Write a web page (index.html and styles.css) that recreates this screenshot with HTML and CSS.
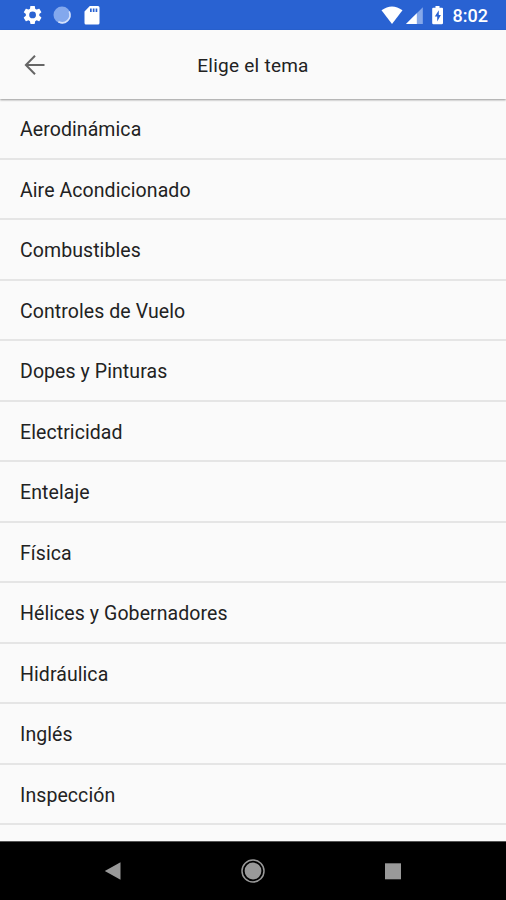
FILE: index.html
```html
<!DOCTYPE html>
<html lang="es">
<head>
<meta charset="utf-8">
<title>Elige el tema</title>
<link rel="stylesheet" href="styles.css">
</head>
<body>
<div class="screen">
  <div class="status">
    <svg class="status-icons" width="90" height="30" viewBox="0 0 90 30">
      <path fill="#fff" transform="translate(-.7 3.7) scale(.94)" d="M19.14 12.94c.04-.3.06-.61.06-.94s-.02-.64-.07-.94l2.03-1.58c.18-.14.23-.41.12-.61l-1.92-3.32c-.12-.22-.37-.29-.59-.22l-2.39.96c-.5-.38-1.03-.7-1.62-.94l-.36-2.54c-.04-.24-.24-.41-.48-.41h-3.84c-.24 0-.43.17-.47.41l-.36 2.54c-.59.24-1.13.57-1.62.94l-2.39-.96c-.22-.08-.47 0-.59.22L2.74 8.87c-.12.21-.08.47.12.61l2.03 1.58c-.05.3-.09.63-.09.94s.02.64.07.94l-2.03 1.58c-.18.14-.23.41-.12.61l1.92 3.32c.12.22.37.29.59.22l2.39-.96c.5.38 1.03.7 1.62.94l.36 2.54c.05.24.24.41.48.41h3.84c.24 0 .44-.17.47-.41l.36-2.54c.59-.24 1.13-.56 1.62-.94l2.39.96c.22.08.47 0 .59-.22l1.92-3.32c.12-.22.07-.47-.12-.61l-2.01-1.58zM12 15.6A3.6 3.6 0 1 1 12 8.4a3.6 3.6 0 0 1 0 7.2z"/>
      <circle cx="40" cy="15" r="8.5" fill="#83a8ed"/>
      <path d="M47.4 12a7.8 7.8 0 0 1-10.5 10" fill="none" stroke="#d5e2fb" stroke-width="1.6" stroke-linecap="round"/>
      <path fill="#fff" fill-rule="evenodd" d="M67.8 6H76q1.500 0 1.500 1.500V23q0 1.500-1.500 1.500H64q-1.500 0-1.500-1.500V11.500zM68 8.500V12h1.700V8.500zm2.800 0V12h1.700V8.500zm2.800 0V12h1.700V8.500z"/>
    </svg>
    <div class="status-right">
      <svg class="signals" width="64" height="30" viewBox="0 0 64 30">
        <path fill="#fff" d="M.5 10.300Q11 2.500 21.500 10.300L11 24z"/>
        <path fill="#86a8e9" d="M41.800 7.200V24H25z"/>
        <path fill="#fff" d="M35.800 13.200V24H25z"/>
        <path fill="#fff" d="M54.500 6h4v1.800H61q1 0 1 1V23q0 1.300-1.300 1.300h-8.200q-1.300 0-1.300-1.300V8.800q0-1 1-1h2.300z"/>
        <path fill="#2962d2" d="M57.800 10.300l-4 6.200h2.400v4.900l3.700-6.300h-2.100z"/>
      </svg>
      <span class="clock">8:02</span>
    </div>
  </div>
  <header class="header">
    <svg class="back" width="22" height="22" viewBox="0 0 22 22"><path d="M20.500 11H2M11 1.800L1.900 11l9.100 9.200" fill="none" stroke="#666" stroke-width="2"/></svg>
    <h1 class="title">Elige el tema</h1>
  </header>
  <ul class="topics">
    <li class="topic">Aerodinámica</li>
    <li class="topic">Aire Acondicionado</li>
    <li class="topic">Combustibles</li>
    <li class="topic">Controles de Vuelo</li>
    <li class="topic">Dopes y Pinturas</li>
    <li class="topic">Electricidad</li>
    <li class="topic">Entelaje</li>
    <li class="topic">Física</li>
    <li class="topic">Hélices y Gobernadores</li>
    <li class="topic">Hidráulica</li>
    <li class="topic">Inglés</li>
    <li class="topic">Inspección</li>
  </ul>
  <nav class="nav">
    <svg width="24" height="24" viewBox="0 0 24 24"><path d="M3.800 12L19.500 3.300v17.400z" fill="#999"/></svg>
    <svg width="24" height="24" viewBox="0 0 24 24"><circle cx="12" cy="12" r="11" fill="none" stroke="#999" stroke-width="1.500"/><circle cx="12" cy="12" r="8.400" fill="#999"/></svg>
    <svg width="24" height="24" viewBox="0 0 24 24"><path d="M4 4.300h16v16H4z" fill="#999"/></svg>
  </nav>
</div>
</body>
</html>
```

FILE: styles.css
```css
body {
  margin: 0;
  font-family: Roboto, "Liberation Sans", sans-serif;
  color: #222;
}

.screen {
  display: flex;
  flex-direction: column;
  height: 900px;
  overflow: hidden;
  background: #fafafa;
}

.status {
  display: flex;
  justify-content: space-between;
  flex: 0 0 30px;
  padding: 0 18px 0 22px;
  background: #2962d2;
}

.status svg {
  display: block;
}

.status-right {
  display: flex;
  gap: 8px;
}

.clock {
  padding-top: 2px;
  color: #fff;
  font-size: 18px;
  font-weight: 500;
  line-height: 28px;
}

.header {
  display: grid;
  grid-template-columns: 22px 1fr 22px;
  align-items: center;
  flex: 0 0 69px;
  padding: 0 24px;
  box-shadow: 0 1px 2px rgba(0, 0, 0, 0.4);
}

.title {
  margin: 3px 0 0;
  font-size: 19px;
  font-weight: 400;
  line-height: 24px;
  letter-spacing: 0.25px;
  text-align: center;
}

.topics {
  flex: 1;
  min-height: 0;
  margin: 0;
  padding: 0;
  list-style: none;
}

.topic {
  box-sizing: border-box;
  height: 60.5px;
  padding: 0 20px;
  border-bottom: 2px solid #e5e5e5;
  font-size: 19.5px;
  line-height: 62px;
  letter-spacing: 0.08px;
}

.nav {
  display: flex;
  align-items: center;
  justify-content: center;
  gap: 116px;
  flex: 0 0 59px;
  box-sizing: border-box;
  border-top: 1px solid #555;
  background: #000;
}
```
